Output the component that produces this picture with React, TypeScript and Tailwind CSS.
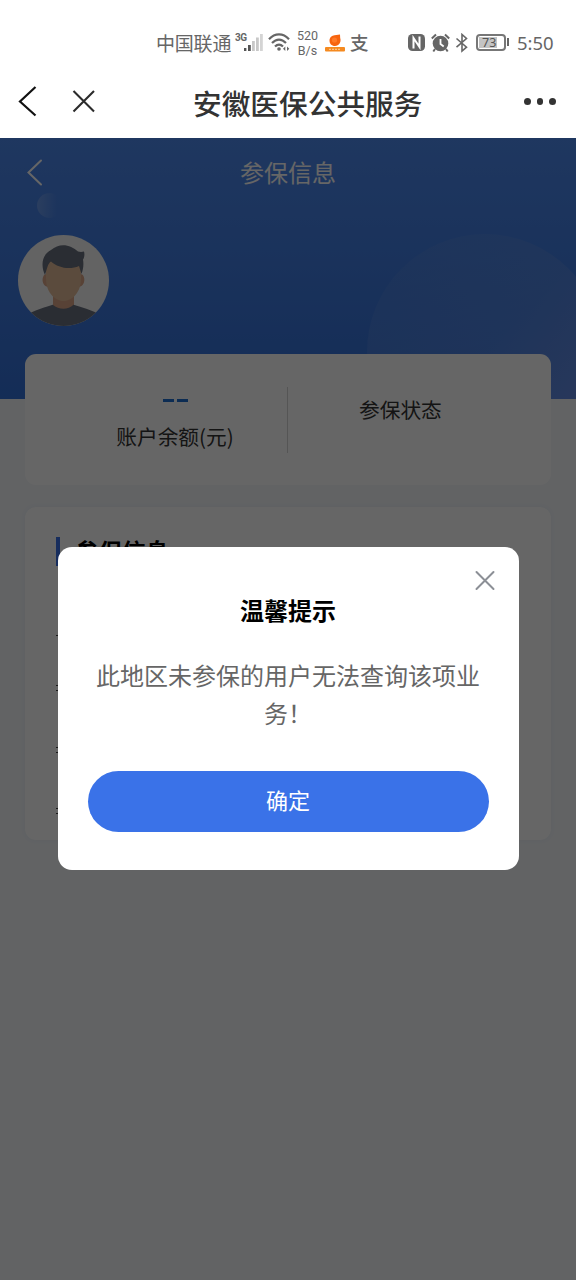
import { ReactNode } from "react";

function StatusBar() {
  return (
    <div className="relative flex h-[66px] items-start text-[#666666]">
      <span className="ml-[156px] mt-[29px] w-[77px] whitespace-nowrap text-[19px] leading-7 tracking-[-0.2px]">
        中国联通
      </span>
      <span className="mt-[32px] w-[12px] pl-[2px] text-[10px] font-bold leading-3 tracking-[-0.5px] [font-family:Roboto,sans-serif]">
        3G
      </span>
      <svg className="-ml-[1px] mt-[33px]" width="20" height="19" viewBox="0 0 20 19">
        <rect x="0" y="15" width="2.4" height="3" fill="#555" />
        <rect x="4" y="12" width="2.8" height="6" fill="#555" />
        <rect x="8" y="8" width="2.8" height="10" fill="#c8c8c8" />
        <rect x="12" y="4.500" width="2.8" height="13.500" fill="#c8c8c8" />
        <rect x="16" y="1" width="2.8" height="17" fill="#d4d4d4" />
      </svg>
      <svg className="ml-[4px] mt-[33px]" width="24" height="20" viewBox="0 0 24 20" fill="none" stroke="#666" strokeWidth="2.2">
        <path d="M1 6.200C7-.2 15-.2 21 6.200" />
        <path d="M4 10C8.500 5.400 13.500 5.400 18 10" />
        <path d="M7 13.500C9.500 11 12.500 11 15 13.500" />
        <circle cx="11" cy="16" r="1.800" fill="#666" stroke="none" />
        <path d="M17.300 13.500L15 15.800L17.300 18ZM19 13.500L21.300 15.800L19 18Z" fill="#666" stroke="none" />
      </svg>
      <div className="ml-[4px] mt-[28px] w-[23px] text-center text-[12.5px] leading-[15px] [font-family:Roboto,sans-serif]">
        <div>520</div>
        <div>B/s</div>
      </div>
      <svg className="ml-[6px] mt-[33px]" width="20" height="20" viewBox="0 0 20 20">
        <path d="M10 13C6.500 13 4.500 10.500 4.500 7.500C4.500 4.500 7 2.500 9.500 2.300L15 1.500L15.200 5C16.500 9 14 13 10 13Z" fill="#f7640f" />
        <circle cx="9.500" cy="7" r="2.600" fill="#ff7a28" />
        <rect x="0" y="14" width="20" height="4.500" rx="1" fill="#f58a20" />
        <path d="M4 16.300H16" stroke="#ffd0a0" strokeWidth="1" strokeDasharray="2 1" />
      </svg>
      <span className="ml-[5px] mt-[28px] w-[20px] text-[18.500px] font-medium leading-7">支</span>
      <svg className="ml-[38px] mt-[33px]" width="19" height="19" viewBox="0 0 19 19">
        <rect x="0" y="1" width="17" height="17" rx="4.500" fill="#666" />
        <path d="M5.500 15.500V5L11.500 14V3.500" fill="none" stroke="#fff" strokeWidth="2" />
      </svg>
      <svg className="ml-[4px] mt-[33px]" width="20" height="20" viewBox="0 0 20 20">
        <circle cx="9.500" cy="10.500" r="7.800" fill="#666" />
        <path d="M.8 5.500L5 1.500M18.200 5.500L14 1.500M4 16L2.300 18.500M15 16L16.700 18.500" stroke="#666" strokeWidth="2" />
        <path d="M9.500 6V11L12.700 13.500" fill="none" stroke="#fff" strokeWidth="1.800" />
      </svg>
      <svg className="ml-[4px] mt-[33px]" width="14" height="20" viewBox="0 0 14 20">
        <path d="M1.500 5.500L11.500 14.200L7 18V1.500L11.500 5.500L1.500 14.200" fill="none" stroke="#666" strokeWidth="1.600" />
      </svg>
      <div className="ml-[7px] mt-[34px] flex h-[17px] w-[30px] rounded-[4px] border-2 border-[#777] p-[1px]">
        <span className="w-[18px] bg-[#c4c4c4] pl-[3px] text-[12.500px] leading-[11px] text-[#555] [font-family:'Noto_Sans',sans-serif]">
          73
        </span>
      </div>
      <div className="ml-[1px] mt-[38px] h-[8px] w-[2px] bg-[#666]" />
      <span className="ml-[8px] mt-[31px] whitespace-nowrap text-[18.500px] leading-6 [font-family:'Noto_Sans',sans-serif]">
        5:50
      </span>
    </div>
  );
}

function TitleBar() {
  return (
    <div className="flex h-[71.500px] items-center">
      <svg className="ml-[16px] -mt-[2px]" width="24" height="34" viewBox="0 0 24 34" fill="none" stroke="#111" strokeWidth="2.200">
        <path d="M19.500 3L4 17.500L19.500 31.500" />
      </svg>
      <svg className="ml-[31px] -mt-[1px]" width="26" height="26" viewBox="0 0 26 26" stroke="#2b2b2b" strokeWidth="2.100">
        <path d="M2.500 3L23 23.500M23 3L2.500 23.500" />
      </svg>
      <h1 className="ml-[96px] mt-[1px] w-[231px] whitespace-nowrap text-[28.700px] font-medium text-[#333]">
        安徽医保公共服务
      </h1>
      <div className="-mt-[1px] ml-[100px] flex gap-[6px]">
        <i className="size-[6.500px] rounded-full bg-[#333]" />
        <i className="size-[6.500px] rounded-full bg-[#333]" />
        <i className="size-[6.500px] rounded-full bg-[#333]" />
      </div>
    </div>
  );
}

function Avatar() {
  return (
    <svg className="ml-[18px] mt-[28px]" width="91" height="92" viewBox="0 0 91 92">
      <defs>
        <clipPath id="face">
          <circle cx="45.500" cy="45.500" r="45.500" />
        </clipPath>
      </defs>
      <g clipPath="url(#face)">
        <rect width="91" height="92" fill="#f7f7f7" />
        <path d="M35 58H56V72L46 76L35 72Z" fill="#dba587" />
        <path d="M8 80C17 75 27 72 34.700 69.700C41 75 50 75 55.500 69.700C64 72 74 75 83 80V92H8Z" fill="#6a7180" />
        <path d="M29 39C24 38 22 50 30 52ZM62 39C67 38 69 50 61 52Z" fill="#dba587" />
        <path d="M28 24H63V44C63 56 55 66 45.500 66C36 66 28 56 28 44Z" fill="#e3bb98" />
        <path d="M27 40C23 32 23 20 33 15C42 7 53 10 60 16.500C62 17 64 17 66 16.500C67 20 66 23 65 24.500C66 30 65 35 63.500 39L61 31C52 35 40 33 33 26.500C30 28 29 34 27 40Z" fill="#69717f" />
      </g>
    </svg>
  );
}

function Card({ className, children }: { className: string; children?: ReactNode }) {
  return (
    <div className={`relative mx-[25px] rounded-[11px] bg-white ${className}`}>
      {children}
    </div>
  );
}

function Dialog() {
  return (
    <div className="absolute left-[57.500px] top-[409px] flex h-[323.500px] w-[461px] flex-col rounded-[14px] bg-white">
      <button className="absolute right-[23px] top-[22px]">
        <svg width="22" height="22" viewBox="0 0 22 22" stroke="#8c8f96" strokeWidth="2" strokeLinecap="round">
          <path d="M2.500 3L19.500 20M19.500 3L2.500 20" />
        </svg>
      </button>
      <h2 className="mt-[45px] text-center text-[24px] font-bold leading-9 text-black">温馨提示</h2>
      <p className="mx-[38px] mt-[28px] text-center text-[24px] leading-[38px] text-[#666]">
        此地区未参保的用户无法查询该项业务！
      </p>
      <button className="mx-[30px] mt-[39px] h-[61px] rounded-full bg-[#3a72e8] pb-[3px] text-[22px] text-white">
        确定
      </button>
    </div>
  );
}

export default function App() {
  return (
    <main className="flex h-[1280px] w-[576px] flex-col overflow-hidden bg-white [font-family:'Noto_Sans_CJK_SC',sans-serif]">
      <StatusBar />
      <TitleBar />
      <div className="relative flex-1 overflow-hidden bg-[#f4f7fa]">
        <header className="relative h-[261px] overflow-hidden bg-linear-to-b from-[#4e8aef] to-[#3370d8]">
          {/* decorative circles */}
          <div className="absolute left-[37px] top-[55px] size-[25px] rounded-full bg-linear-to-r from-white/20 to-white/0 to-80%" />
          <div className="absolute left-[367px] top-[96px] size-[236px] rounded-full bg-linear-to-br from-[#5d8fe0]/20 via-[#5a8ae2]/60 to-[#7494e8]" />
          <div className="relative flex h-[69px] items-center">
            <svg className="ml-[26px]" width="18" height="28" viewBox="0 0 18 28" fill="none" stroke="#fff" strokeWidth="2" strokeLinecap="round">
              <path d="M15 2.500L2.500 14.500L15 26.500" />
            </svg>
            <div className="ml-[196px] text-[24px] text-white">参保信息</div>
          </div>
          <Avatar />
        </header>
        <Card className="-mt-[45px] flex h-[131px]">
          <div className="ml-[62px] w-[176px] text-center">
            <div className="mt-[45px] flex h-[3px] justify-center gap-[3px]">
              <i className="w-[11px] bg-[#1f6fd0]" />
              <i className="w-[11px] bg-[#1f6fd0]" />
            </div>
            <div className="mt-[19px] text-[20.700px] leading-[30px] text-[#333]">账户余额(元)</div>
          </div>
          <div className="ml-[24px] mt-[33px] h-[66px] w-px bg-[#d4d4d4]" />
          <div className="ml-[71px] mt-[40px] text-[20.700px] leading-[30px] text-[#333]">参保状态</div>
        </Card>
        <Card className="mt-[22px] h-[333px] pl-[31px] pt-[30px] shadow-[0_0_4px_#e8eef6]">
          <div className="flex h-[29px] items-center">
            <i className="h-full w-[4px] bg-[#3a72e8]" />
            <h3 className="mt-[1px] ml-[15px] text-[23.500px] font-bold text-black">参保信息</h3>
          </div>
          {/* leading edges of the rows under the dialog */}
          <div className="flex w-[2px] flex-col">
            <i className="mt-[69px] h-px bg-[#444]" />
            <i className="mt-[49px] h-[6px] border-y border-[#444]" />
            <i className="mt-[56px] h-[6px] border-y border-[#444]" />
            <i className="mt-[55px] h-[6px] border-y border-[#444]" />
          </div>
        </Card>
        <div className="absolute inset-0 bg-black/60" />
        <Dialog />
      </div>
    </main>
  );
}
